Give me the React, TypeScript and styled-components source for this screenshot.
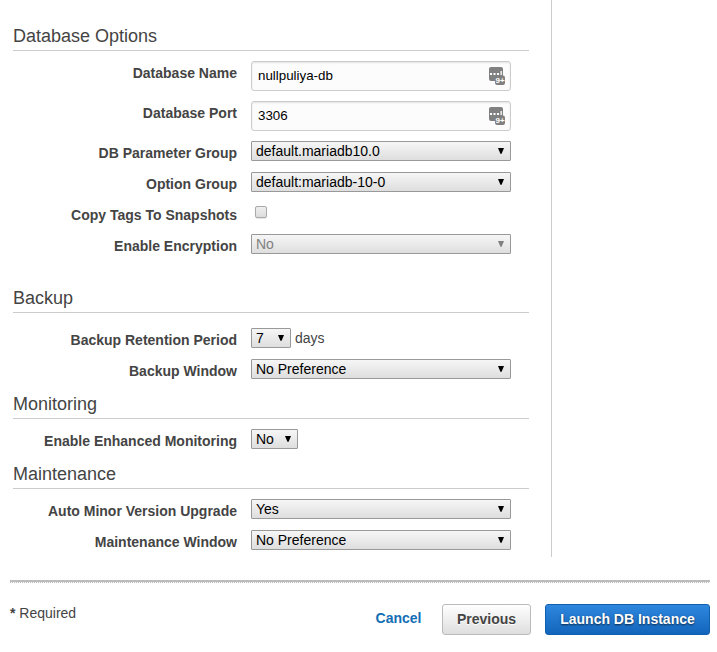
import React from 'react';
import styled, { createGlobalStyle } from 'styled-components';

const Global = createGlobalStyle`
  * { box-sizing: border-box; }
  body {
    margin: 0;
    background: #fff;
    color: #444;
    font: 14px/16px "Liberation Sans", Arial, sans-serif;
  }
`;

const Page = styled.div`
  width: 717px;
  height: 652px;
  overflow: hidden;
`;

const Panel = styled.main`
  width: 552px;
  height: 557px;
  padding: 26px 22px 0 13px;
  border-right: 1px solid #ccc;
`;

const Section = styled.section<{ $before?: number }>`
  margin-top: ${(p) => p.$before ?? 0}px;
`;

const Heading = styled.h2`
  margin: 0;
  height: 25px;
  border-bottom: 1px solid #ccc;
  font-size: 18px;
  line-height: 20px;
  font-weight: normal;
`;

const Fields = styled.div<{ $top?: number }>`
  display: flex;
  flex-direction: column;
  gap: 11px;
  padding-top: ${(p) => p.$top ?? 10}px;
`;

const TextFields = styled.div`
  display: flex;
  flex-direction: column;
  gap: 10px;
  margin-bottom: -1px;
`;

const Row = styled.div<{ $height?: number }>`
  display: grid;
  grid-template-columns: 224px 260px;
  column-gap: 14px;
  align-items: start;
  height: ${(p) => p.$height ?? 20}px;
`;

const Label = styled.span`
  padding-top: 4px;
  text-align: right;
  font-weight: bold;
  white-space: nowrap;
`;

const InputBox = styled.div`
  display: flex;
  align-items: center;
  justify-content: space-between;
  height: 30px;
  padding: 0 5px 0 6px;
  border: 1px solid #ccc;
  border-radius: 3px;
  background: #fcfcfc;
  box-shadow: inset 0 1px 2px rgba(0, 0, 0, 0.1);
  color: #000;
  font-size: 13.333px;
`;

const Inline = styled.div`
  display: flex;
  align-items: center;
  gap: 4px;
  height: 20px;
`;

const SelectBox = styled.div<{ $width?: number; $disabled?: boolean }>`
  display: flex;
  align-items: center;
  justify-content: space-between;
  width: ${(p) => p.$width ?? 260}px;
  height: 20px;
  padding: 0 6px 0 4px;
  border: 1px solid #999;
  border-radius: 1px;
  background: linear-gradient(#f6f6f6, #dedede);
  color: ${(p) => (p.$disabled ? '#808080' : '#000')};
`;

const ArrowShape = styled.svg`
  display: block;
  margin-bottom: 1px;
`;

const CheckBox = styled.div`
  width: 12px;
  height: 12px;
  margin: 3px 0 0 4px;
  border: 1px solid #a9a9a9;
  border-radius: 2px;
  background: linear-gradient(#eee, #dcdcdc);
  box-shadow: 0 1px 1px rgba(0, 0, 0, 0.1);
`;

const Rule = styled.div`
  width: 700px;
  height: 3px;
  margin: 23px 0 0 10px;
  background:
    repeating-linear-gradient(90deg, #bbb 0 1px, #fff 1px 2px) 0 2px / 100% 1px no-repeat,
    #bbb;
`;

const Footer = styled.footer`
  display: flex;
  width: 700px;
  margin: 21px 0 0 10px;
`;

const Required = styled.div`
  flex: 1;
  padding-top: 1px;
`;

const Cancel = styled.a`
  padding-top: 6px;
  margin-right: 20.5px;
  color: #146eb4;
  font-weight: bold;
`;

const Button = styled.button<{ $primary?: boolean }>`
  width: ${(p) => (p.$primary ? 165 : 89)}px;
  height: 31px;
  padding: 0 0 2px;
  margin-left: ${(p) => (p.$primary ? 14 : 0)}px;
  border: 1px solid ${(p) => (p.$primary ? '#1160b0' : '#bbb')};
  border-radius: 3px;
  background: ${(p) => (p.$primary ? 'linear-gradient(#2f87de, #1265bb)' : 'linear-gradient(#fff, #dedede)')};
  color: ${(p) => (p.$primary ? '#fff' : '#444')};
  text-shadow: ${(p) => (p.$primary ? '0 1px 2px rgba(0, 0, 0, 0.65)' : '0 1px 0 #fff')};
  font: bold 14px/16px "Liberation Sans", Arial, sans-serif;
`;

const Arrow = () => (
  <ArrowShape width="6" height="7" viewBox="0 0 6 7">
    <path d="M0 1H6L3.6 6.7H2.4Z" fill="currentColor" />
  </ArrowShape>
);

const ManagerIcon = () => (
  <svg width="16" height="18" viewBox="0 0 16 18">
    <rect width="14" height="14" rx="2" fill="#808080" />
    <rect x="6" y="8.6" width="10" height="9.4" rx="2" fill="#808080" />
    <path d="M1 6h2v2H1zM4.5 6h2v2h-2zM8 6h2v2H8zM11.5 4h1.3v4h-1.3z" fill="#fff" />
    <text x="6.6" y="15.6" fontSize="8" fontWeight="bold" fontFamily="Liberation Sans" fill="#fff">
      9+
    </text>
  </svg>
);

const TextRow = ({ label, value }: { label: string; value: string }) => (
  <Row $height={30}>
    <Label>{label}</Label>
    <InputBox>
      <span>{value}</span>
      <ManagerIcon />
    </InputBox>
  </Row>
);

type SelectRowProps = { label: string; value: string; width?: number; disabled?: boolean; suffix?: string };

const SelectRow = ({ label, value, width, disabled, suffix }: SelectRowProps) => (
  <Row>
    <Label>{label}</Label>
    <Inline>
      <SelectBox $width={width} $disabled={disabled}>
        <span>{value}</span>
        <Arrow />
      </SelectBox>
      {suffix && <span>{suffix}</span>}
    </Inline>
  </Row>
);

export default function App() {
  return (
    <Page>
      <Global />
      <Panel>
        <Section>
          <Heading>Database Options</Heading>
          <Fields>
            <TextFields>
              <TextRow label="Database Name" value="nullpuliya-db" />
              <TextRow label="Database Port" value="3306" />
            </TextFields>
            <SelectRow label="DB Parameter Group" value="default.mariadb10.0" />
            <SelectRow label="Option Group" value="default:mariadb-10-0" />
            <Row>
              <Label>Copy Tags To Snapshots</Label>
              <CheckBox role="checkbox" aria-checked="false" />
            </Row>
            <SelectRow label="Enable Encryption" value="No" disabled />
          </Fields>
        </Section>
        <Section $before={34}>
          <Heading>Backup</Heading>
          <Fields $top={15}>
            <SelectRow label="Backup Retention Period" value="7" width={40} suffix="days" />
            <SelectRow label="Backup Window" value="No Preference" />
          </Fields>
        </Section>
        <Section $before={15}>
          <Heading>Monitoring</Heading>
          <Fields>
            <SelectRow label="Enable Enhanced Monitoring" value="No" width={47} />
          </Fields>
        </Section>
        <Section $before={15}>
          <Heading>Maintenance</Heading>
          <Fields>
            <SelectRow label="Auto Minor Version Upgrade" value="Yes" />
            <SelectRow label="Maintenance Window" value="No Preference" />
          </Fields>
        </Section>
      </Panel>
      <Rule />
      <Footer>
        <Required>
          <b>*</b> Required
        </Required>
        <Cancel>Cancel</Cancel>
        <Button>Previous</Button>
        <Button $primary>Launch DB Instance</Button>
      </Footer>
    </Page>
  );
}
